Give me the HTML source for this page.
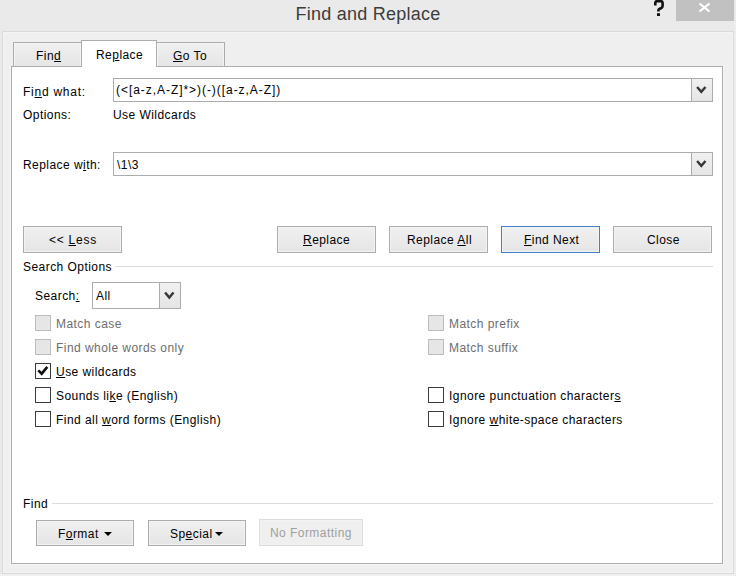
<!DOCTYPE html>
<html><head><meta charset="utf-8">
<style>
*{margin:0;padding:0;box-sizing:border-box}
html,body{width:736px;height:576px;overflow:hidden;background:#eaeaea;font-family:"Liberation Sans",sans-serif;font-size:12px;color:#000;letter-spacing:0.45px}
.a{position:absolute;white-space:nowrap;line-height:14px}
u{text-decoration:underline;text-underline-offset:1px}
.title{left:0;width:736px;top:3px;text-align:center;font-size:18px;line-height:22px;color:#3c3c3c;letter-spacing:0.25px}
.help{left:654px;top:0px;font-size:17px;line-height:18px;font-weight:bold;color:#222;letter-spacing:0}
.close{left:676px;top:0;width:58px;height:21px;background:#c1c1c1}
.frame{left:2px;top:31px;width:732px;height:543px;border:1px solid #d9d9d9;background:#efefef;box-shadow:inset 0 0 0 1px #f4f4f4}
.tab{height:25px;top:42px;border:1px solid #acacac;border-bottom:none;background:linear-gradient(#f0f0f0,#e5e5e5);z-index:1;box-shadow:inset 1px 1px 0 #f5f5f5,inset -1px 0 0 #f3f3f3}
.tabsel{top:40px;height:27px;background:#fff;z-index:3;box-shadow:none}
.panel{left:11px;top:66px;width:712px;height:498px;border:1px solid #acacac;background:#fff;z-index:2;box-shadow:1px 1px 0 #f6f6f6,-1px 0 0 #f6f6f6}
.lbl{z-index:5}
.combo{z-index:5;height:24px;border:1px solid #acacac;background:#fff}
.dd{position:absolute;right:0;top:0;width:21px;height:22px;border-left:1px solid #acacac;background:linear-gradient(#f0f0f0,#e5e5e5)}
.btn{z-index:5;height:27px;border:1px solid #acacac;background:linear-gradient(#f0f0f0,#e5e5e5);box-shadow:inset 0 0 0 1px #f3f3f3}
.sep{z-index:5;height:1px;background:#dcdcdc}
.cb{z-index:5;width:16px;height:16px;border:1px solid #3c3c3c;background:#fff}
.cbd{border-color:#bdbdbd;background:#e6e6e6}
.dis{color:#6d6d6d}
</style></head><body>
<div class="a title">Find and Replace</div>
<svg class="a" width="24" height="20" style="left:648px;top:0"><path d="M7.3,5.6 L7.3,3 Q7.3,1.15 9.2,1.15 L12.7,1.15 Q14.6,1.15 14.6,3 L14.6,6 Q14.6,7.6 13,8.2 L11.6,8.8 Q10.4,9.3 10.4,10.5 L10.4,11.6" fill="none" stroke="#111" stroke-width="2.6"/><rect x="9" y="13.2" width="3" height="2.8" fill="#111"/></svg>
<div class="a close"><svg width="58" height="21" viewBox="0 0 58 21" style="position:absolute;left:0;top:0"><path d="M23.5 3.5 L33.5 11.5 M33.5 3.5 L23.5 11.5" stroke="#fff" stroke-width="2.2"/></svg></div>
<div class="a frame"></div>
<div class="a" style="left:0;top:574px;width:736px;height:2px;background:#f0f0f0"></div><div class="a" style="left:734px;top:22px;width:2px;height:554px;background:#eeeeee"></div>

<div class="a tab" style="left:13px;width:69px"></div><div class="a lbl" style="left:36px;top:49px">Fin<u>d</u></div>
<div class="a tab tabsel" style="left:81px;width:76px"></div><div class="a lbl" style="left:96px;top:48px">Re<u>p</u>lace</div>
<div class="a tab" style="left:156px;width:69px"></div><div class="a lbl" style="left:173px;top:49px"><u>G</u>o To</div>
<div class="a panel"></div>

<div class="a lbl" style="left:23px;top:85px;letter-spacing:0.75px">Fi<u>n</u>d what:</div>
<div class="a combo" style="left:113px;top:78px;width:600px"><div class="a" style="left:2px;top:4px;letter-spacing:0.95px">(&lt;[a-z,A-Z]*&gt;)(-)([a-z,A-Z])</div><div class="dd"><svg width="22" height="22" style="position:absolute;left:0;top:0"><polyline points="5.1,8 9.3,12.9 13.5,8" fill="none" stroke="#383838" stroke-width="2.4"/></svg></div></div>
<div class="a lbl" style="left:23px;top:108px">Options:</div>
<div class="a lbl" style="left:113px;top:108px">Use Wildcards</div>

<div class="a lbl" style="left:23px;top:158px">Replace w<u>i</u>th:</div>
<div class="a combo" style="left:113px;top:152px;width:600px"><div class="a" style="left:3px;top:5px">\1\3</div><div class="dd"><svg width="22" height="22" style="position:absolute;left:0;top:0"><polyline points="5.1,8 9.3,12.9 13.5,8" fill="none" stroke="#383838" stroke-width="2.4"/></svg></div></div>

<div class="a btn" style="left:23px;top:226px;width:99px"></div><div class="a lbl" style="left:49px;top:233px;letter-spacing:0.75px">&lt;&lt; <u>L</u>ess</div>
<div class="a btn" style="left:277px;top:226px;width:99px"></div><div class="a lbl" style="left:303px;top:233px"><u>R</u>eplace</div>
<div class="a btn" style="left:389px;top:226px;width:99px"></div><div class="a lbl" style="left:407px;top:233px">Replace <u>A</u>ll</div>
<div class="a btn" style="left:501px;top:226px;width:99px;border-color:#3f80c8"></div><div class="a lbl" style="left:524px;top:233px"><u>F</u>ind Next</div>
<div class="a btn" style="left:613px;top:226px;width:99px"></div><div class="a lbl" style="left:647px;top:233px">Close</div>

<div class="a lbl" style="left:23px;top:260px">Search Options</div>
<div class="a sep" style="left:115px;top:266px;width:598px"></div>

<div class="a lbl" style="left:35px;top:289px">Search<u>:</u></div>
<div class="a combo" style="left:92px;top:282px;width:89px;height:27px"><div class="a" style="left:3px;top:6px">All</div><div class="dd" style="height:25px;width:21px"><svg width="22" height="24" style="position:absolute;left:0;top:0"><polyline points="5.1,9.4 9.3,14.6 13.5,9.4" fill="none" stroke="#383838" stroke-width="2.4"/></svg></div></div>

<div class="a cb cbd" style="left:35px;top:315px"></div><div class="a lbl dis" style="left:56px;top:317px">Match case</div>
<div class="a cb cbd" style="left:35px;top:339px"></div><div class="a lbl dis" style="left:56px;top:341px">Find whole words only</div>
<div class="a cb" style="left:35px;top:363px"><svg width="16" height="16" style="position:absolute;left:-1px;top:-1px"><polyline points="3.3,7.3 6.7,10.7 12.3,3.9" fill="none" stroke="#111" stroke-width="2.6"/></svg></div><div class="a lbl" style="left:56px;top:365px"><u>U</u>se wildcards</div>
<div class="a cb" style="left:35px;top:387px"></div><div class="a lbl" style="left:56px;top:389px">Sounds li<u>k</u>e (English)</div>
<div class="a cb" style="left:35px;top:411px"></div><div class="a lbl" style="left:56px;top:413px">Find all <u>w</u>ord forms (English)</div>

<div class="a cb cbd" style="left:428px;top:315px"></div><div class="a lbl dis" style="left:449px;top:317px">Match prefix</div>
<div class="a cb cbd" style="left:428px;top:339px"></div><div class="a lbl dis" style="left:449px;top:341px">Match suffix</div>
<div class="a cb" style="left:428px;top:387px"></div><div class="a lbl" style="left:449px;top:389px">Ignore punctuation character<u>s</u></div>
<div class="a cb" style="left:428px;top:411px"></div><div class="a lbl" style="left:449px;top:413px">Ignore <u>w</u>hite-space characters</div>

<div class="a lbl" style="left:23px;top:497px">Find</div>
<div class="a sep" style="left:52px;top:503px;width:661px"></div>

<div class="a btn" style="left:36px;top:520px;width:98px;height:26px"></div><div class="a lbl" style="left:58px;top:527px">F<u>o</u>rmat<span style="display:inline-block;width:0;height:0;border-left:4px solid transparent;border-right:4px solid transparent;border-top:4px solid #000;vertical-align:2px;margin-left:5px"></span></div>
<div class="a btn" style="left:148px;top:520px;width:98px;height:26px"></div><div class="a lbl" style="left:170px;top:527px">Sp<u>e</u>cial<span style="display:inline-block;width:0;height:0;border-left:4px solid transparent;border-right:4px solid transparent;border-top:4px solid #000;vertical-align:2px;margin-left:2px"></span></div>
<div class="a btn" style="left:259px;top:519px;width:104px;height:27px;background:#efefef;border-color:#dcdcdc"></div><div class="a lbl" style="left:270px;top:526px;color:#a0a0a0">No Formatting</div>
</body></html>
